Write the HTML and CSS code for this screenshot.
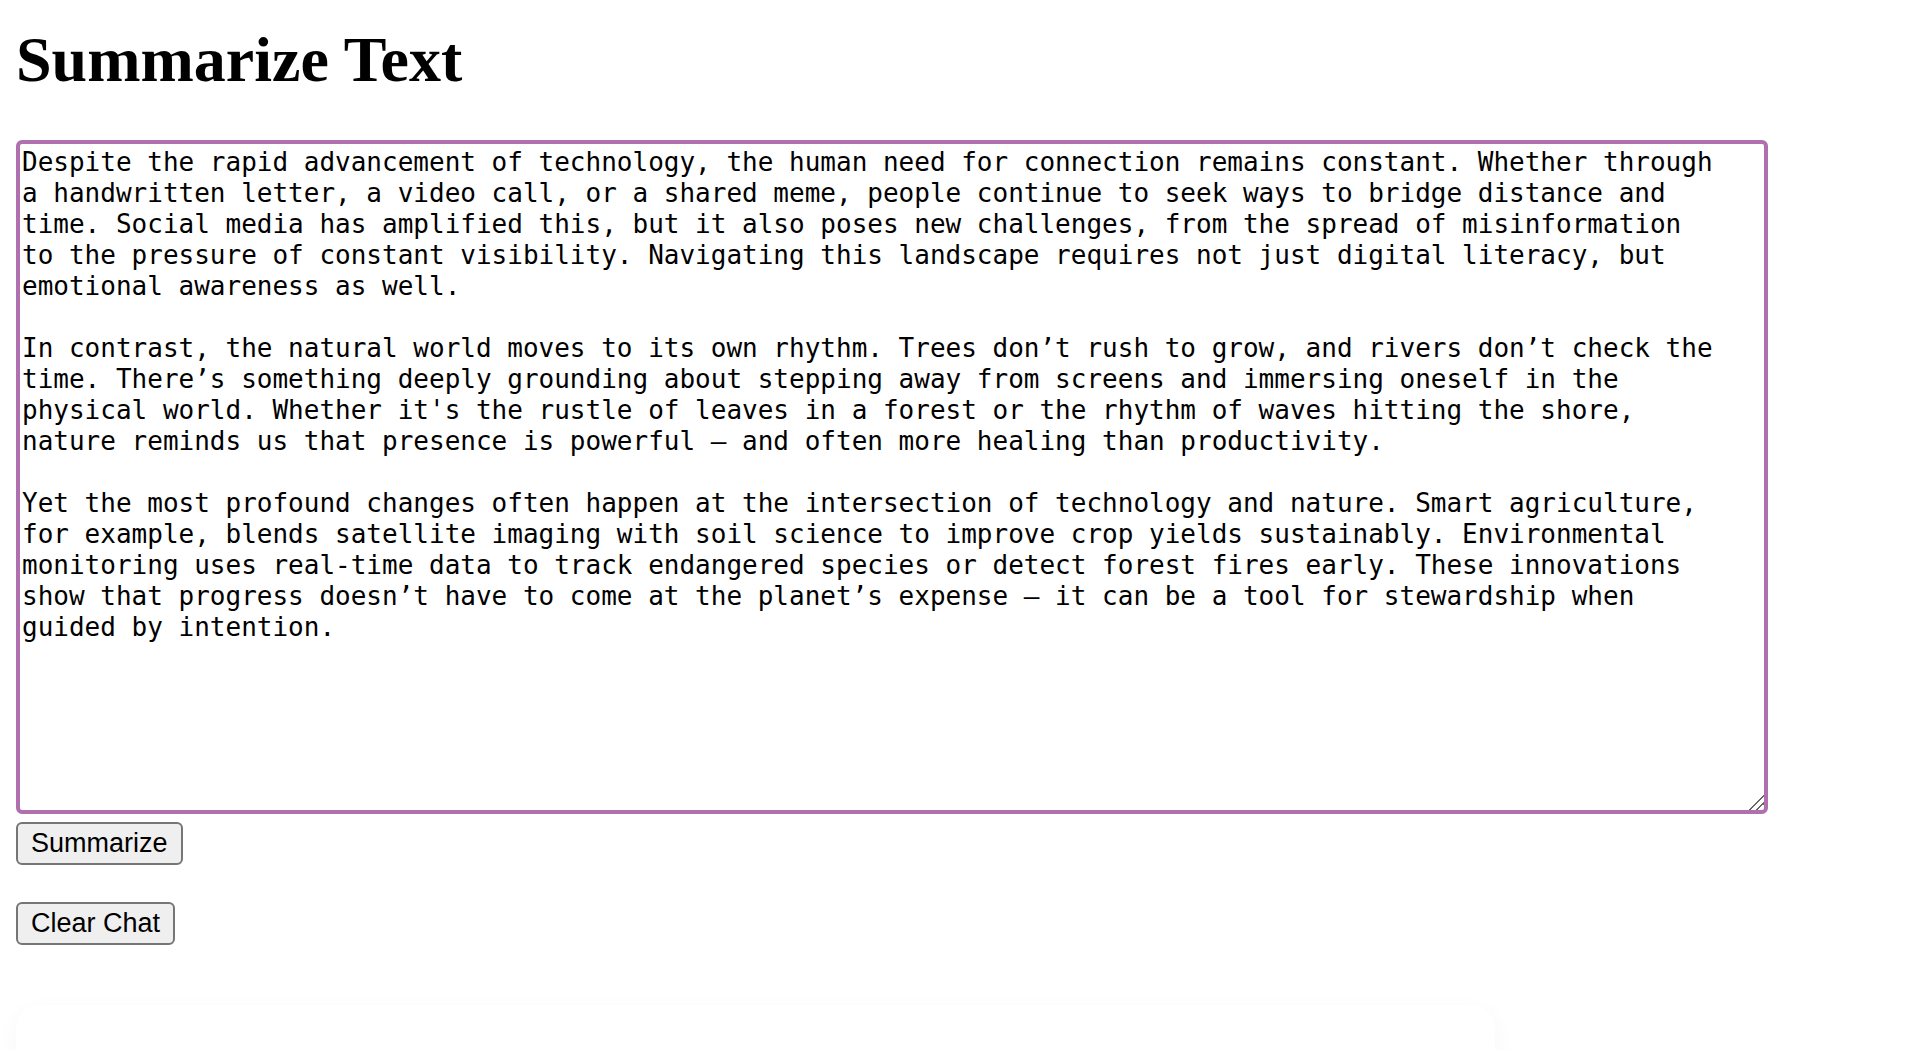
FILE: index.html
```html
<!DOCTYPE html>
<html lang="en">
<head>
<meta charset="utf-8">
<title>Summarize Text</title>
<link rel="stylesheet" href="styles.css">
</head>
<body>
<h1 class="title" id="page-title">Summarize Text</h1>
<form class="form">
<textarea class="input" aria-labelledby="page-title" spellcheck="false">Despite the rapid advancement of technology, the human need for connection remains constant. Whether through a handwritten letter, a video call, or a shared meme, people continue to seek ways to bridge distance and time. Social media has amplified this, but it also poses new challenges, from the spread of misinformation to the pressure of constant visibility. Navigating this landscape requires not just digital literacy, but emotional awareness as well.

In contrast, the natural world moves to its own rhythm. Trees don’t rush to grow, and rivers don’t check the time. There’s something deeply grounding about stepping away from screens and immersing oneself in the physical world. Whether it's the rustle of leaves in a forest or the rhythm of waves hitting the shore, nature reminds us that presence is powerful — and often more healing than productivity.

Yet the most profound changes often happen at the intersection of technology and nature. Smart agriculture, for example, blends satellite imaging with soil science to improve crop yields sustainably. Environmental monitoring uses real-time data to track endangered species or detect forest fires early. These innovations show that progress doesn’t have to come at the planet’s expense — it can be a tool for stewardship when guided by intention.</textarea>
<button class="button" type="button">Summarize</button>
</form>
<button class="button clear" type="button">Clear Chat</button>
<section class="chat" aria-label="Chat"></section>
</body>
</html>
```
FILE: styles.css
```css
* {
  box-sizing: border-box;
}

body {
  display: flex;
  flex-direction: column;
  align-items: flex-start;
  height: 100vh;
  margin: 0;
  padding: 23px 16px 0;
  overflow: hidden;
  background: #fff;
  color: #000;
  font-family: "Liberation Serif", "Times New Roman", serif;
}

.title {
  margin: 0 0 43px;
  font-size: 64px;
  line-height: 74px;
}

.form {
  display: flex;
  flex: none;
  flex-direction: column;
  align-items: flex-start;
  gap: 8px;
  width: 100%;
  margin: 0;
}

.input {
  width: 92.5%;
  height: 674px;
  padding: 3px 46px 3px 2px;
  border: 4px solid #b06fae;
  border-radius: 6px;
  outline: none;
  background: #fff;
  color: #000;
  font: 26px/31px "DejaVu Sans Mono", monospace;
}

.input::-webkit-scrollbar {
  width: 14px;
  height: 14px;
}

.input::-webkit-resizer {
  background: linear-gradient(135deg, transparent 48%, #666 48%, #666 55%, transparent 55%, transparent 73%, #666 73%, #666 80%, transparent 80%);
}

.button {
  flex: none;
  height: 43px;
  padding: 0 13px;
  border: 2px solid #767676;
  border-radius: 6px;
  background: #efefef;
  color: #000;
  font: 27px/37px "Liberation Sans", Arial, sans-serif;
}

.clear {
  margin-top: 37px;
}

.chat {
  flex: none;
  width: 78.1%;
  min-height: 400px;
  margin-top: 60px;
  border-radius: 24px;
  background: #fff;
  box-shadow: 0 8px 24px rgba(0, 0, 0, 0.04);
}
```
